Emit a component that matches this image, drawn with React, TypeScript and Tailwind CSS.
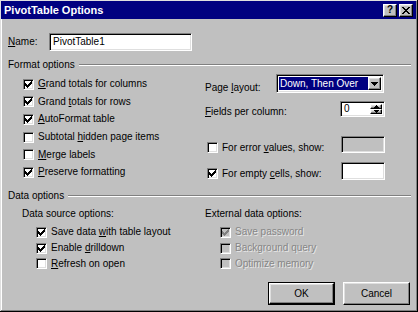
import React from "react";

const raised =
  "border border-t-white border-l-white border-b-black border-r-black shadow-[inset_-1px_-1px_#808080,inset_1px_1px_#dfdfdf]";
const sunken =
  "border border-t-[#808080] border-l-[#808080] border-b-white border-r-white shadow-[inset_1px_1px_#000,inset_-1px_-1px_#dfdfdf]";

function Check({ checked, disabled }: { checked?: boolean; disabled?: boolean }) {
  return (
    <span
      className={`${sunken} w-[11px] h-[11px] shrink-0 flex items-center justify-center ${
        disabled ? "bg-[#c0c0c0]" : "bg-white"
      }`}
    >
      {checked && (
        <svg width="7" height="7" viewBox="0 0 7 7" shapeRendering="crispEdges">
          <path
            d="M6 0h1v3h-1zM5 1h1v3h-1zM4 2h1v3h-1zM3 3h1v3h-1zM2 4h1v3h-1zM1 3h1v3h-1zM0 2h1v3h-1z"
            fill={disabled ? "#808080" : "#000"}
          />
        </svg>
      )}
    </span>
  );
}

function CheckRow({
  checked,
  disabled,
  children,
  className = "",
}: {
  checked?: boolean;
  disabled?: boolean;
  children: React.ReactNode;
  className?: string;
}) {
  return (
    <div className={`flex items-center gap-[4px] ${className}`}>
      <Check checked={checked} disabled={disabled} />
      <span className={disabled ? "text-[#868686] [text-shadow:1px_1px_0_#e8e8e8]" : ""}>{children}</span>
    </div>
  );
}

function GroupHeader({ label }: { label: string }) {
  return (
    <div className="flex items-center h-[12px] pl-[7px] pr-[5px]">
      <span>{label}</span>
      <span className="flex-1 ml-[4px] h-[2px] border-t border-t-[#808080] border-b border-b-white" />
    </div>
  );
}

export default function App() {
  return (
    <div className="w-[418px] h-[312px] overflow-hidden bg-[#c0c0c0] pt-[1px] pl-[1px] pr-[2px] pb-[2px] shadow-[inset_-1px_-1px_#000,inset_1px_1px_#dfdfdf,inset_-2px_-2px_#808080,inset_2px_2px_#fff] flex flex-col font-['Liberation_Sans',Arial,sans-serif] text-[10px] leading-none text-black select-none">
      {/* title bar */}
      <div className="shrink-0 h-[18px] bg-[#000080] flex items-center justify-between pl-[3px] pr-[3px]">
        <span className="text-white font-bold text-[11px]">PivotTable Options</span>
        <div className="flex gap-[2px]">
          <span className={`${raised} bg-[#c0c0c0] w-[14px] h-[13px] flex items-center justify-center font-bold text-[10px]`}>
            ?
          </span>
          <span className={`${raised} bg-[#c0c0c0] w-[14px] h-[13px] flex items-center justify-center`}>
            <svg width="8" height="7" viewBox="0 0 8 7" shapeRendering="crispEdges">
              <path d="M0 0h2v1h-2zM6 0h2v1h-2zM1 1h2v1h-2zM5 1h2v1h-2zM2 2h4v1h-4zM3 3h2v1h-2zM2 4h4v1h-4zM1 5h2v1h-2zM5 5h2v1h-2zM0 6h2v1h-2zM6 6h2v1h-2z" fill="#000" />
            </svg>
          </span>
        </div>
      </div>

      {/* name */}
      <div className="shrink-0 flex items-center h-[18px] mt-[14px] pl-[7px]">
        <span className="w-[41px]">
          <u>N</u>ame:
        </span>
        <div className={`${sunken} bg-white w-[143px] h-[18px] flex items-center pl-[3px]`}>PivotTable1</div>
      </div>

      {/* format options */}
      <div className="shrink-0 mt-[8px]">
        <GroupHeader label="Format options" />
      </div>
      <div className="shrink-0 flex">
        <div className="w-[204px] pl-[22px] pt-[4.5px] flex flex-col">
          <CheckRow checked className="h-[17.6px]">
            <u>G</u>rand totals for columns
          </CheckRow>
          <CheckRow checked className="h-[17.6px]">
            Grand <u>t</u>otals for rows
          </CheckRow>
          <CheckRow checked className="h-[17.6px]">
            <u>A</u>utoFormat table
          </CheckRow>
          <CheckRow className="h-[17.6px]">
            Subtotal <u>h</u>idden page items
          </CheckRow>
          <CheckRow className="h-[17.6px]">
            <u>M</u>erge labels
          </CheckRow>
          <CheckRow checked className="h-[17.6px]">
            <u>P</u>reserve formatting
          </CheckRow>
        </div>
        <div className="flex-1 flex flex-col pt-[3px]">
          <div className="flex items-start h-[19px]">
            <span className="w-[71px] mt-[9px]">
              Page <u>l</u>ayout:
            </span>
            <div className={`${sunken} bg-white w-[108px] h-[19px] flex items-center p-[2px]`}>
              <span className="flex-1 h-full bg-[#000080] text-white flex items-center pl-[1px]">Down, Then Over</span>
              <span className={`${raised} bg-[#c0c0c0] w-[13px] h-full flex items-center justify-center`}>
                <svg width="7" height="4" viewBox="0 0 7 4" shapeRendering="crispEdges">
                  <path d="M0 0h7v1h-7zM1 1h5v1h-5zM2 2h3v1h-3zM3 3h1v1h-1z" fill="#000" />
                </svg>
              </span>
            </div>
          </div>
          <div className="flex items-start h-[16px] mt-[8px]">
            <span className="w-[135px] mt-[6px]">
              <u>F</u>ields per column:
            </span>
            <div className={`${sunken} bg-white w-[45px] h-[16px] flex items-center p-[2px]`}>
              <span className="flex-1 pl-[1px]">0</span>
              <div className="w-[12px] h-full flex flex-col">
                <span className={`${raised} bg-[#c0c0c0] flex-1 flex items-center justify-center`}>
                  <svg width="5" height="3" viewBox="0 0 5 3" shapeRendering="crispEdges">
                    <path d="M2 0h1v1h-1zM1 1h3v1h-3zM0 2h5v1h-5z" fill="#000" />
                  </svg>
                </span>
                <span className={`${raised} bg-[#c0c0c0] flex-1 flex items-center justify-center`}>
                  <svg width="5" height="3" viewBox="0 0 5 3" shapeRendering="crispEdges">
                    <path d="M0 0h5v1h-5zM1 1h3v1h-3zM2 2h1v1h-1z" fill="#000" />
                  </svg>
                </span>
              </div>
            </div>
          </div>
          <div className="flex items-start h-[17px] mt-[19px]">
            <div className="w-[136px] pl-[2px] mt-[6px]">
              <CheckRow>
                For error <u>v</u>alues, show:
              </CheckRow>
            </div>
            <div className={`${sunken} bg-[#c0c0c0] w-[44px] h-[17px]`} />
          </div>
          <div className="flex items-start h-[18px] mt-[9px]">
            <div className="w-[136px] pl-[2px] mt-[6px]">
              <CheckRow checked>
                For empty <u>c</u>ells, show:
              </CheckRow>
            </div>
            <div className={`${sunken} bg-white w-[44px] h-[18px]`} />
          </div>
        </div>
      </div>

      {/* data options */}
      <div className="shrink-0 mt-[9px]">
        <GroupHeader label="Data options" />
      </div>
      <div className="shrink-0 flex mt-[6px]">
        <div className="w-[204px] pl-[21px] flex flex-col">
          <span className="h-[12px] flex items-center">Data source options:</span>
          <div className="pl-[14px] mt-[4px] flex flex-col">
            <CheckRow checked className="h-[16px]">
              Save data <u>w</u>ith table layout
            </CheckRow>
            <CheckRow checked className="h-[16px]">
              Enable <u>d</u>rilldown
            </CheckRow>
            <CheckRow className="h-[15px]">
              <u>R</u>efresh on open
            </CheckRow>
          </div>
        </div>
        <div className="flex-1 flex flex-col">
          <span className="h-[12px] flex items-center">External data options:</span>
          <div className="pl-[15px] mt-[4px] flex flex-col">
            <CheckRow checked disabled className="h-[16px]">
              Save password
            </CheckRow>
            <CheckRow disabled className="h-[16px]">
              Background query
            </CheckRow>
            <CheckRow disabled className="h-[15px]">
              Optimize memory
            </CheckRow>
          </div>
          <div className="flex gap-[8px] mt-[11px] pl-[63px]">
            <div className="border border-black">
              <div className={`${raised} bg-[#c0c0c0] w-[65px] h-[21px] flex items-center justify-center`}>OK</div>
            </div>
            <div className={`${raised} bg-[#c0c0c0] w-[67px] h-[23px] flex items-center justify-center`}>Cancel</div>
          </div>
        </div>
      </div>
    </div>
  );
}
